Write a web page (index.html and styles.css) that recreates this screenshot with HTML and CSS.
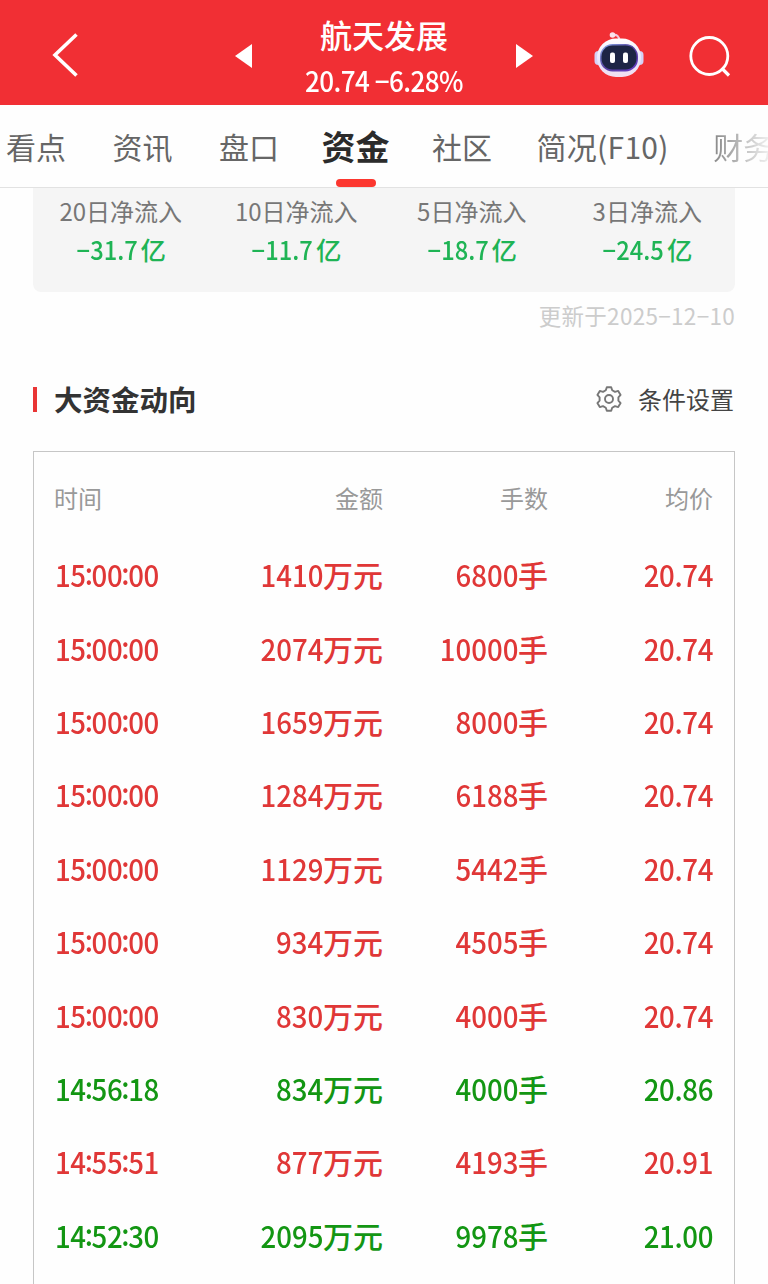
FILE: index.html
```html
<!DOCTYPE html>
<html lang="zh-CN">
<head>
<meta charset="utf-8">
<title>航天发展 - 资金</title>
<link rel="stylesheet" href="styles.css">
</head>
<body>
<div class="screen">
  <header class="topbar">
    <svg class="back" width="28" height="46" viewBox="0 0 28 46"><path d="M25.500 2.500 4 23 25.500 43.500" fill="none" stroke="#fff" stroke-width="3.600"/></svg>
    <svg class="prev" width="17" height="24" viewBox="0 0 17 24"><path d="M17 0V24L0 12Z" fill="#fff"/></svg>
    <div class="stock">
      <h1 class="stock-name">航天发展</h1>
      <div class="stock-quote">20.74 <span class="minus">−</span>6.28%</div>
    </div>
    <svg class="next" width="17" height="24" viewBox="0 0 17 24"><path d="M0 0V24L17 12Z" fill="#fff"/></svg>
    <svg class="robot" width="50" height="46" viewBox="0 0 50 46">
      <defs>
        <linearGradient id="shell" x1="0" y1="0" x2="0" y2="1"><stop offset="0" stop-color="#fff"/><stop offset=".65" stop-color="#e6e2fa"/><stop offset="1" stop-color="#f3dff0"/></linearGradient>
        <linearGradient id="rim" x1="0" y1="0" x2="1" y2="1"><stop offset="0" stop-color="#8cb0ea"/><stop offset=".5" stop-color="#56409f"/><stop offset="1" stop-color="#6739c4"/></linearGradient>
      </defs>
      <path d="M19 3Q25 2 25.500 9" fill="none" stroke="#f3c9dc" stroke-width="2"/>
      <circle cx="18.500" cy="3" r="2.800" fill="#fbe3ec"/>
      <rect x="0.500" y="19" width="8" height="14" rx="4" fill="#d5d1f6"/>
      <rect x="41.500" y="19" width="8" height="14" rx="4" fill="#d5d1f6"/>
      <rect x="3" y="6.500" width="44" height="38.500" rx="19" fill="url(#shell)"/>
      <rect x="6" y="12" width="38" height="27.500" rx="12.500" fill="url(#rim)"/>
      <rect x="7.500" y="13.500" width="35" height="24" rx="11" fill="#1d2545"/>
      <rect x="16" y="20.500" width="5" height="10.500" rx="2" fill="#fff"/>
      <rect x="29" y="20.500" width="5" height="10.500" rx="2" fill="#fff"/>
    </svg>
    <svg class="search" width="42" height="42" viewBox="0 0 42 42"><circle cx="20.300" cy="20" r="18.500" fill="none" stroke="#fff" stroke-width="2.800"/><path d="M32.500 32 40 39.500" stroke="#fff" stroke-width="3.200"/></svg>
  </header>

  <nav class="tabs">
    <a class="tab">看点</a>
    <a class="tab">资讯</a>
    <a class="tab">盘口</a>
    <a class="tab tab-active">资金</a>
    <a class="tab">社区</a>
    <a class="tab tab-profile">简况(F10)</a>
    <a class="tab tab-fade">财务</a>
  </nav>

  <main class="content">
    <section class="flows">
      <div class="flow"><div class="flow-label">20日净流入</div><div class="flow-value"><span class="n"><span class="minus">−</span>31.7</span>亿</div></div>
      <div class="flow"><div class="flow-label">10日净流入</div><div class="flow-value"><span class="n"><span class="minus">−</span>11.7</span>亿</div></div>
      <div class="flow"><div class="flow-label">5日净流入</div><div class="flow-value"><span class="n"><span class="minus">−</span>18.7</span>亿</div></div>
      <div class="flow"><div class="flow-label">3日净流入</div><div class="flow-value"><span class="n"><span class="minus">−</span>24.5</span>亿</div></div>
    </section>
    <div class="updated">更新于2025<span class="minus">−</span>12<span class="minus">−</span>10</div>

    <div class="section-head">
      <h2 class="section-title">大资金动向</h2>
      <div class="settings">
        <svg width="28" height="26" viewBox="0 0 28 26" fill="none" stroke="#777" stroke-width="1.900" stroke-linejoin="round"><path d="M11.800 1.200H16.200L17.200 4.300 20 5.900 23.200 4.900 25.600 8.900 23.400 11.300V14.700L25.600 17.100 23.200 21.100 20 20.100 17.200 21.700 16.200 24.800H11.800L10.800 21.700 8 20.100 4.800 21.100 2.400 17.100 4.600 14.700V11.300L2.400 8.900 4.800 4.900 8 5.900 10.800 4.300Z"/><circle cx="14" cy="13" r="4"/></svg>
        <span>条件设置</span>
      </div>
    </div>

    <section class="trades">
      <div class="row head"><span>时间</span><span>金额</span><span>手数</span><span>均价</span></div>
      <div class="row up"><span class="n">15<i>:</i>00<i>:</i>00</span><span><b class="n">1410</b>万元</span><span><b class="n">6800</b>手</span><span class="n">20.74</span></div>
      <div class="row up"><span class="n">15<i>:</i>00<i>:</i>00</span><span><b class="n">2074</b>万元</span><span><b class="n">10000</b>手</span><span class="n">20.74</span></div>
      <div class="row up"><span class="n">15<i>:</i>00<i>:</i>00</span><span><b class="n">1659</b>万元</span><span><b class="n">8000</b>手</span><span class="n">20.74</span></div>
      <div class="row up"><span class="n">15<i>:</i>00<i>:</i>00</span><span><b class="n">1284</b>万元</span><span><b class="n">6188</b>手</span><span class="n">20.74</span></div>
      <div class="row up"><span class="n">15<i>:</i>00<i>:</i>00</span><span><b class="n">1129</b>万元</span><span><b class="n">5442</b>手</span><span class="n">20.74</span></div>
      <div class="row up"><span class="n">15<i>:</i>00<i>:</i>00</span><span><b class="n">934</b>万元</span><span><b class="n">4505</b>手</span><span class="n">20.74</span></div>
      <div class="row up"><span class="n">15<i>:</i>00<i>:</i>00</span><span><b class="n">830</b>万元</span><span><b class="n">4000</b>手</span><span class="n">20.74</span></div>
      <div class="row down"><span class="n">14<i>:</i>56<i>:</i>18</span><span><b class="n">834</b>万元</span><span><b class="n">4000</b>手</span><span class="n">20.86</span></div>
      <div class="row up"><span class="n">14<i>:</i>55<i>:</i>51</span><span><b class="n">877</b>万元</span><span><b class="n">4193</b>手</span><span class="n">20.91</span></div>
      <div class="row down"><span class="n">14<i>:</i>52<i>:</i>30</span><span><b class="n">2095</b>万元</span><span><b class="n">9978</b>手</span><span class="n">21.00</span></div>
    </section>
  </main>
</div>
</body>
</html>
```
FILE: styles.css
```css
* { box-sizing: border-box; margin: 0; padding: 0; }
body { font-family: "Noto Sans CJK SC", sans-serif; background: #fefefe; color: #333; }
.screen { width: 768px; height: 1284px; overflow: hidden; display: flex; flex-direction: column; background: #fefefe; }

.topbar { flex: none; height: 105px; background: #f12f34; color: #fff; display: flex; align-items: center; padding: 6px 37px 0 51px; }
.topbar svg { display: block; flex: none; }
.back { margin-top: -2px; }
.prev { margin-left: 156px; }
.stock { width: 180px; margin: 3px 42px 0 42px; text-align: center; }
.stock-name { font-size: 32px; font-weight: 500; line-height: 46px; white-space: nowrap; }
.stock-quote { font-size: 28px; font-weight: 500; line-height: 46px; letter-spacing: -0.6px; white-space: nowrap; transform: scaleX(0.93); }
.robot { margin-left: 61px; margin-top: -2px; }
.search { margin-left: auto; margin-top: 2px; }

.tabs { flex: none; height: 83px; border-bottom: 1px solid #e2e2e2; display: flex; gap: 46.5px; padding-left: 6px; overflow: hidden; }
.tab { flex: none; font-size: 30px; line-height: 82px; color: #666; white-space: nowrap; }
.tab-active { position: relative; font-size: 34px; font-weight: 700; color: #2b2b2b; margin: 0 -4px; }
.tab-active::after { content: ""; position: absolute; left: 50%; bottom: 0; width: 40px; height: 8px; margin-left: -20px; border-radius: 4px; background: #fc372f; }
.tab-profile { margin: 0 -2px; letter-spacing: 0.3px; }
.tab-fade { background: linear-gradient(90deg, #888 0, #f0f0f0 56px); -webkit-background-clip: text; background-clip: text; color: transparent; }

.content { padding: 0 33px; }
.flows { height: 104px; background: #f5f5f5; border-radius: 0 0 8px 8px; display: grid; grid-template-columns: repeat(4, 1fr); text-align: center; padding-top: 4px; }
.flow-label { font-size: 24px; line-height: 38px; color: #777; white-space: nowrap; }
.flow-value { font-size: 25.5px; font-weight: 500; line-height: 38px; color: #1fb455; white-space: nowrap; }
.flow-value .n { display: inline-block; margin: 0 3px 0 -4px; transform: scaleX(0.93); transform-origin: right; }
.updated { text-align: right; font-size: 22.5px; line-height: 32px; margin-top: 7px; color: #ccc; letter-spacing: 0.3px; }

.section-head { display: flex; justify-content: space-between; align-items: center; height: 44px; margin-top: 46px; }
.section-title { font-size: 28.5px; font-weight: 700; line-height: 44px; display: flex; align-items: center; gap: 17px; }
.section-title::before { content: ""; width: 4px; height: 25px; background: #e93535; }
.settings { display: flex; align-items: center; gap: 15px; font-size: 24px; line-height: 44px; color: #444; padding-right: 1px; }

.trades { margin-top: 30px; height: 860px; border: 1px solid #c6c6c6; padding: 5.5px 20px; }
.row { display: grid; grid-template-columns: 130px 199px 165px 165px; height: 73.4px; align-items: center; text-align: right; font-size: 30px; font-weight: 500; line-height: 44px; white-space: nowrap; }
.row > :first-child { text-align: left; }
.head { height: 80px; font-size: 24px; font-weight: 400; color: #999; }
.up { color: #e03737; }
.down { color: #139613; }
/* Narrow figures: condensed horizontally so digits keep open spacing. */
.row .n { display: inline-block; transform: scaleX(0.92); transform-origin: right; letter-spacing: 0; }
.row b { font-weight: inherit; margin-left: -10px; }
.row > .n { letter-spacing: -0.4px; }
.row > .n:first-child { transform-origin: left; padding-left: 1px; letter-spacing: -0.5px; }
.row i { font-style: normal; position: relative; top: -2px; margin: 0 -0.9px; }
```
